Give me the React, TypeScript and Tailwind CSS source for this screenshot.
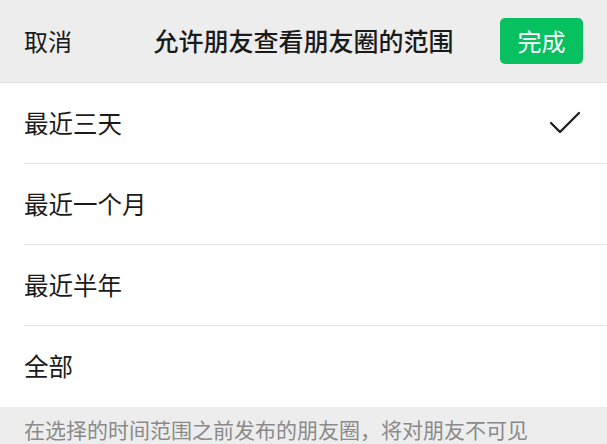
const options = ["最近三天", "最近一个月", "最近半年", "全部"];

function Check() {
  return (
    <svg width="32" height="26" viewBox="0 0 32 26" fill="none">
      <polyline points="2,13 11,22 30,3" stroke="#1a1a1a" strokeWidth="2.2" strokeLinecap="round" strokeLinejoin="round" />
    </svg>
  );
}

export default function App() {
  const selected = 0;
  return (
    <div
      className="w-[607px] h-[444px] overflow-hidden bg-white"
      style={{ fontFamily: '"Noto Sans CJK SC", "Noto Sans", sans-serif' }}
    >
      <header className="relative h-[83px] bg-[#ededed] flex items-center justify-between px-6 border-b border-[#e2e2e2]">
        <span className="text-[24px] text-[#1a1a1a]">取消</span>
        <span className="absolute left-0 right-0 text-center text-[25px] font-medium text-[#1a1a1a] pointer-events-none">
          允许朋友查看朋友圈的范围
        </span>
        <button className="w-[83px] h-[46px] rounded-[5px] bg-[#07c160] text-white text-[24px]">
          完成
        </button>
      </header>
      <ul>
        {options.map((o, i) => (
          <li key={o} className="pl-6">
            <div
              className={
                "h-[81px] flex items-center justify-between pr-[26px] " +
                (i < options.length - 1 ? "border-b border-[#e3e3e3]" : "")
              }
            >
              <span className="text-[24.5px] text-[#1a1a1a]">{o}</span>
              {i === selected && <Check />}
            </div>
          </li>
        ))}
      </ul>
      <div className="bg-[#ededed] h-[40px] pl-6 pt-[9px] text-[21px] leading-[27px] text-[#8a8a8a]">
        在选择的时间范围之前发布的朋友圈，将对朋友不可见
      </div>
    </div>
  );
}
